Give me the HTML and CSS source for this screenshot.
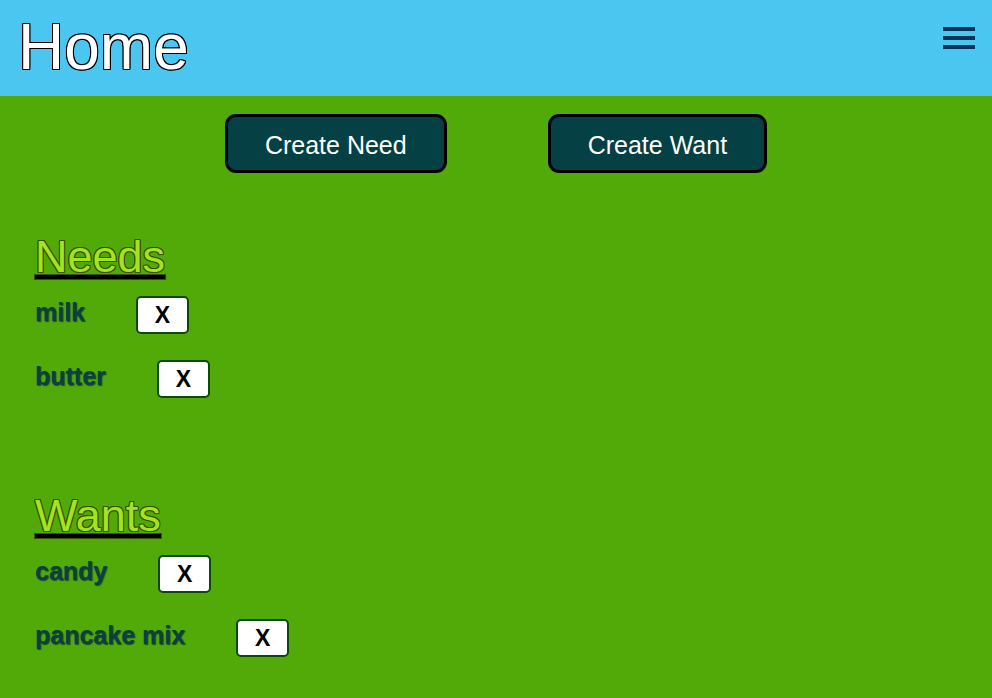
FILE: index.html
```html
<!DOCTYPE html>
<html>
<head>
<meta charset="utf-8">
<link rel="stylesheet" href="styles.css">
</head>
<body>
<header class="topbar">
  <h1 class="title">Home</h1>
  <button class="menu" aria-label="menu">
    <span class="bar"></span><span class="bar"></span><span class="bar"></span>
  </button>
</header>
<main class="content">
  <div class="actions">
    <button class="create">Create Need</button>
    <button class="create">Create Want</button>
  </div>
  <section class="list needs">
    <h2 class="heading">Needs</h2>
    <div class="item"><span class="label">milk</span><button class="del">X</button></div>
    <div class="item"><span class="label">butter</span><button class="del">X</button></div>
  </section>
  <section class="list wants">
    <h2 class="heading">Wants</h2>
    <div class="item"><span class="label">candy</span><button class="del">X</button></div>
    <div class="item"><span class="label">pancake mix</span><button class="del">X</button></div>
  </section>
</main>
</body>
</html>
```
FILE: styles.css
```css
html, body {
  margin: 0;
  padding: 0;
}
body {
  font-family: "Liberation Sans", Arial, sans-serif;
  background: #52aa08;
  width: 992px;
  height: 698px;
  overflow: hidden;
}
.topbar {
  background: #4bc6f0;
  height: 96px;
  display: flex;
  justify-content: space-between;
  align-items: flex-start;
  box-sizing: border-box;
  padding: 0 17px 0 18px;
}
.title {
  margin: 0;
  font-size: 64px;
  font-weight: normal;
  line-height: 95px;
  color: #fff;
  text-shadow:
    -1px -1px 0 #000, 1px -1px 0 #000, -1px 1px 0 #000, 1px 1px 0 #000,
    0 -1px 0 #000, 0 1px 0 #000, -1px 0 0 #000, 1px 0 0 #000;
}
.menu {
  background: none;
  border: 0;
  padding: 0;
  margin-top: 27px;
  width: 32px;
  display: flex;
  flex-direction: column;
  gap: 5px;
}
.bar {
  display: block;
  width: 32px;
  height: 4px;
  background: #06335a;
}
.actions {
  display: flex;
  justify-content: center;
  gap: 101px;
  padding-top: 18px;
}
.create {
  font-family: "Liberation Sans", Arial, sans-serif;
  font-size: 25px;
  color: #fff;
  background: #044044;
  border: 3px solid #000;
  border-radius: 11px;
  padding: 14px 37px 10px;
  line-height: 29px;
  height: 59px;
}
.list {
  padding-left: 35px;
}
.needs {
  margin-top: 62px;
}
.wants {
  margin-top: 96px;
}
.heading {
  margin: 0 0 17px;
  font-size: 45px;
  font-weight: normal;
  line-height: 44px;
  color: #a2e41e;
  text-shadow:
    -1px -1px 0 #3b4f00, 1px -1px 0 #3b4f00, -1px 1px 0 #3b4f00, 1px 1px 0 #3b4f00,
    0 -1px 0 #3b4f00, 0 1px 0 #3b4f00, -1px 0 0 #3b4f00, 1px 0 0 #3b4f00;
  text-decoration: underline;
  text-decoration-color: #000;
  text-decoration-thickness: 4px;
  text-underline-offset: 3px;
  text-decoration-skip-ink: none;
}
.item {
  display: flex;
  align-items: center;
  gap: 51px;
  height: 38px;
  margin-bottom: 26px;
}
.label {
  font-size: 25px;
  font-weight: bold;
  color: #0a4040;
  text-shadow: 1px 1px 1px #1a4a22;
  margin-top: -6px;
}
.del {
  font-family: "Liberation Sans", Arial, sans-serif;
  width: 53px;
  height: 38px;
  box-sizing: border-box;
  background: #fff;
  border: 2px solid #0b4a0b;
  border-radius: 5px;
  font-size: 23px;
  font-weight: bold;
  color: #000;
  padding: 0;
}
```
